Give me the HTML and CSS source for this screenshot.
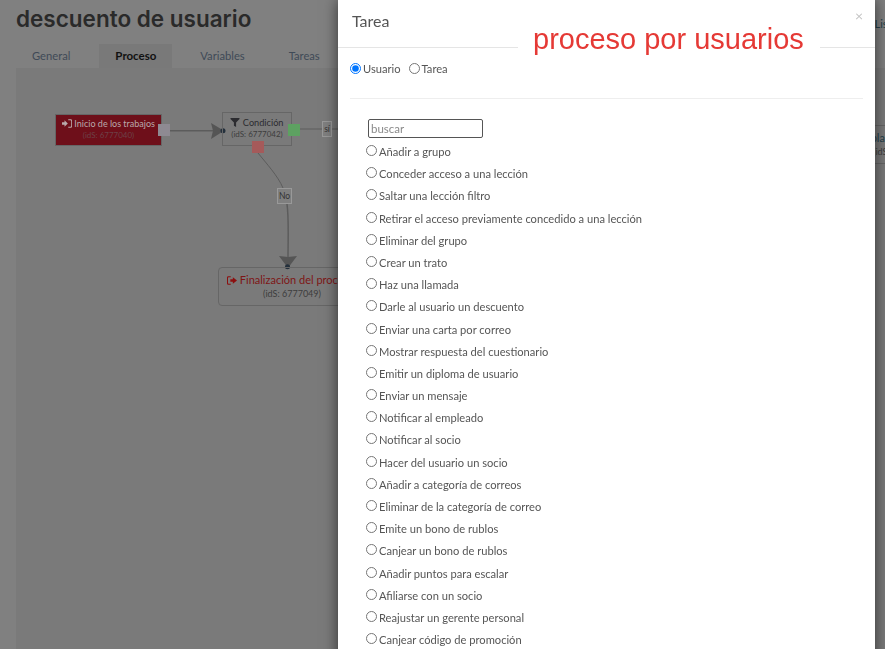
FILE: index.html
```html
<!DOCTYPE html>
<html lang="es">
<head>
  <meta charset="UTF-8" />
  <title>descuento de usuario</title>
  <link rel="stylesheet" href="styles.css">
</head>
<body>
<header class="cabecera">
  <h1>descuento de usuario</h1>
  <a class="enlace-lista" href="#">Lista</a>
</header>
<nav class="pestanas">
  <a href="#">General</a>
  <a href="#" class="activa">Proceso</a>
  <a href="#">Variables</a>
  <a href="#">Tareas</a>
</nav>
<section class="lienzo">
  <svg class="conexiones" width="900" height="560">
    <path d="M154 62.700H200" class="linea gruesa"/>
    <path d="M195 55L208 62.700L195 71L197 62.700Z" class="flecha"/>
    <circle cx="207" cy="62.700" r="2.500" class="punto"/>
    <path d="M284 61H330" class="linea"/>
    <path d="M242 85C250 95 262 108 267 120" class="linea"/>
    <path d="M271 136C273 150 272 175 272 190" class="linea gruesa"/>
    <path d="M263 188L272 189L281 188L272 200Z" class="flecha"/>
    <circle cx="271.500" cy="198.700" r="2.500" class="punto"/>
  </svg>

  <div class="nodo inicio">
    <div class="nodo-titulo">
      <svg class="icono" viewBox="0 0 12 10"><path d="M0 3.500H3V1L7 5L3 9V6.500H0ZM7.500 0H10.500Q12 0 12 1.500V8.500Q12 10 10.500 10H7.500V9H10Q11 9 11 8V2Q11 1 10 1H7.500Z"/></svg>
      Inicio de los trabajos
    </div>
    <div class="nodo-id">(idS: 6777040)</div>
  </div>
  <span class="puerto puerto-gris"></span>

  <div class="nodo condicion">
    <div class="nodo-titulo">
      <svg class="icono" viewBox="0 0 10 10"><path d="M0 0H10V1L6.200 5V10L3.800 8.500V5L0 1Z"/></svg>
      Condición
    </div>
    <div class="nodo-id">(idS: 6777042)</div>
  </div>
  <span class="puerto puerto-verde"></span>
  <span class="puerto puerto-rojo"></span>
  <span class="etiqueta etiqueta-si">sí</span>
  <span class="etiqueta etiqueta-no">No</span>

  <div class="nodo final">
    <div class="nodo-titulo">
      <svg class="icono" viewBox="0 0 12 10"><path d="M4.500 0H1.500Q0 0 0 1.500V8.500Q0 10 1.500 10H4.500V8.800H2Q1.200 8.800 1.200 8V2Q1.200 1.200 2 1.200H4.500ZM4 3.500H7V1L12 5L7 9V6.500H4Z"/></svg>
      Finalización del proceso
    </div>
    <div class="nodo-id">(idS: 6777049)</div>
  </div>

  <div class="nodo lateral">
    <div class="nodo-titulo">Hablar</div>
    <div class="nodo-id">(idS: 6777050)</div>
  </div>
</section>

<div class="modal">
  <div class="modal-cabecera">
    <h4>Tarea</h4>
    <span class="cerrar">×</span>
  </div>
  <div class="nota">proceso por usuarios</div>
  <div class="modal-cuerpo">
    <div class="tipo">
      <label><input type="radio" name="tipo" checked>Usuario</label>
      <label><input type="radio" name="tipo">Tarea</label>
    </div>
    <div class="acciones">
      <input class="buscar" type="text" placeholder="buscar">
      <label><input type="radio" name="accion">Añadir a grupo</label>
      <label><input type="radio" name="accion">Conceder acceso a una lección</label>
      <label><input type="radio" name="accion">Saltar una lección filtro</label>
      <label><input type="radio" name="accion">Retirar el acceso previamente concedido a una lección</label>
      <label><input type="radio" name="accion">Eliminar del grupo</label>
      <label><input type="radio" name="accion">Crear un trato</label>
      <label><input type="radio" name="accion">Haz una llamada</label>
      <label><input type="radio" name="accion">Darle al usuario un descuento</label>
      <label><input type="radio" name="accion">Enviar una carta por correo</label>
      <label><input type="radio" name="accion">Mostrar respuesta del cuestionario</label>
      <label><input type="radio" name="accion">Emitir un diploma de usuario</label>
      <label><input type="radio" name="accion">Enviar un mensaje</label>
      <label><input type="radio" name="accion">Notificar al empleado</label>
      <label><input type="radio" name="accion">Notificar al socio</label>
      <label><input type="radio" name="accion">Hacer del usuario un socio</label>
      <label><input type="radio" name="accion">Añadir a categoría de correos</label>
      <label><input type="radio" name="accion">Eliminar de la categoría de correo</label>
      <label><input type="radio" name="accion">Emite un bono de rublos</label>
      <label><input type="radio" name="accion">Canjear un bono de rublos</label>
      <label><input type="radio" name="accion">Añadir puntos para escalar</label>
      <label><input type="radio" name="accion">Afiliarse con un socio</label>
      <label><input type="radio" name="accion">Reajustar un gerente personal</label>
      <label><input type="radio" name="accion">Canjear código de promoción</label>
    </div>
  </div>
</div>
</body>
</html>
```

FILE: styles.css
```css
html, body {
  height: 100%;
}
body {
  font-family: 'Lato', sans-serif;
  background: #808080;
  color: #555;
  margin: 0;
  padding: 0 0 0 16px;
  overflow: hidden;
  display: flex;
  flex-direction: column;
}

.cabecera {
  display: flex;
  justify-content: space-between;
  height: 44px;
}
.cabecera h1 {
  margin: 5px 0 0;
  font-family: 'Inter', sans-serif;
  font-size: 22.500px;
  line-height: 27px;
  font-weight: 600;
  color: #2a2a2a;
}
.enlace-lista {
  color: #24404a;
  font-size: 11px;
  text-decoration: none;
  margin: 17px -12px 0 0;
}

.pestanas {
  display: flex;
  height: 24px;
}
.pestanas a {
  color: #3f4a57;
  font-size: 11.200px;
  line-height: 23px;
  text-decoration: none;
  padding: 0 16px;
}
.pestanas a:nth-child(2) {
  margin-left: 13px;
}
.pestanas a:nth-child(3) {
  margin-left: 12px;
}
.pestanas a:nth-child(4) {
  margin-left: 12px;
}
.pestanas .activa {
  background: #797979;
  color: #111;
  font-size: 11.500px;
  font-weight: 700;
}

.lienzo {
  position: relative;
  flex: 1;
  background: #7a7a7a;
}
.conexiones {
  position: absolute;
  left: 0;
  top: 0;
}
.linea {
  fill: none;
  stroke: #5c5c5c;
  stroke-width: 1;
}
.gruesa {
  stroke-width: 1.500;
}
.flecha {
  fill: #555;
}
.punto {
  fill: #24303c;
}

.nodo {
  position: absolute;
  box-sizing: border-box;
  border: 1px solid #666;
  text-align: center;
  font-size: 9.200px;
}
.nodo-titulo {
  color: #2c2c30;
  line-height: 12px;
  white-space: nowrap;
}
.nodo-id {
  color: #3d3d3d;
  font-size: 8px;
  line-height: 11px;
  white-space: nowrap;
}
.icono {
  height: 9px;
  width: 10px;
  vertical-align: -1px;
  fill: currentColor;
}
.inicio {
  left: 39px;
  top: 46px;
  width: 107px;
  height: 32px;
  padding-top: 3px;
  background: #6e0f1a;
}
.inicio .nodo-titulo {
  color: #b9a9ab;
  font-size: 9px;
}
.inicio .nodo-id {
  color: #6d4047;
}
.condicion {
  left: 206px;
  top: 44px;
  width: 70px;
  height: 34px;
  padding-top: 4px;
}
.final {
  left: 202px;
  top: 199px;
  width: 148px;
  height: 39px;
  padding-top: 5px;
  border-radius: 4px;
}
.final .nodo-titulo {
  color: #7e1616;
  font-size: 11px;
  line-height: 14px;
  text-align: left;
  padding-left: 8px;
}
.final .nodo-id {
  font-size: 9px;
  line-height: 13px;
}
.final .icono {
  color: #8c0f0f;
}
.lateral {
  left: 841px;
  top: 57px;
  width: 100px;
  height: 39px;
  padding-top: 5px;
  border-left: 0;
  border-right: 0;
  text-align: left;
}
.lateral .nodo-titulo {
  color: #24404a;
  font-size: 11px;
  line-height: 14px;
}
.lateral .nodo-id {
  font-size: 9px;
  line-height: 13px;
  padding-left: 16px;
}

.puerto {
  position: absolute;
  width: 12px;
  height: 12px;
}
.puerto-gris {
  left: 142px;
  top: 56px;
  background: #8e8a92;
}
.puerto-verde {
  left: 272px;
  top: 56px;
  background: #5da161;
}
.puerto-rojo {
  left: 236px;
  top: 73px;
  background: #a55a5a;
}

.etiqueta {
  position: absolute;
  box-sizing: border-box;
  border: 1px solid #999;
  background: #7f7f7f;
  color: #333;
  font-size: 8.500px;
  text-align: center;
}
.etiqueta-si {
  left: 306px;
  top: 53px;
  width: 10px;
  height: 16px;
  line-height: 14px;
}
.etiqueta-no {
  left: 261px;
  top: 120px;
  width: 15px;
  height: 16px;
  line-height: 14px;
}

.modal {
  position: fixed;
  left: 338px;
  top: 0;
  bottom: -20px;
  width: 537px;
  background: #fff;
  box-shadow: 0 0 14px rgba(0,0,0,0.6);
  overflow: hidden;
}
.modal-cabecera {
  height: 47px;
  border-bottom: 1px solid #e5e5e5;
  position: relative;
}
.modal-cabecera h4 {
  margin: 0;
  padding: 11px 14px 0;
  font-size: 16px;
  line-height: 19px;
  font-weight: 400;
  color: #555;
}
.cerrar {
  position: absolute;
  right: 12px;
  top: 7px;
  font-size: 14px;
  color: #c4c4c4;
}
.nota {
  position: absolute;
  left: 180px;
  top: 23px;
  width: 302px;
  box-sizing: border-box;
  background: #fff;
  padding: 0 15px;
  font-family: 'Liberation Sans', sans-serif;
  font-size: 29px;
  line-height: 32px;
  color: #e53935;
  white-space: nowrap;
}
.modal-cuerpo {
  padding: 0 12px;
}

.tipo {
  display: flex;
  gap: 8px;
  height: 51px;
  padding-top: 14px;
  box-sizing: border-box;
  border-bottom: 1px solid #eee;
}
.tipo label, .acciones label {
  font-size: 11.150px;
  line-height: 14px;
  color: #555;
  white-space: nowrap;
}
input[type=radio] {
  width: 11px;
  height: 11px;
  margin: 0 2px 0 0;
  vertical-align: -1px;
}

.acciones {
  display: flex;
  flex-direction: column;
  align-items: flex-start;
  padding: 20px 0 0 16px;
}
.acciones label {
  height: 22.200px;
  line-height: 22px;
}
.acciones input[type=radio] {
  vertical-align: 0;
}
.buscar {
  box-sizing: border-box;
  width: 115px;
  height: 19px;
  margin: 0 0 3px 2px;
  padding: 0 2px;
  border: 1px solid #555;
  border-radius: 2px;
  font-family: 'Lato', sans-serif;
  font-size: 11.500px;
}
.buscar::placeholder {
  color: #8a8a8a;
}
```
